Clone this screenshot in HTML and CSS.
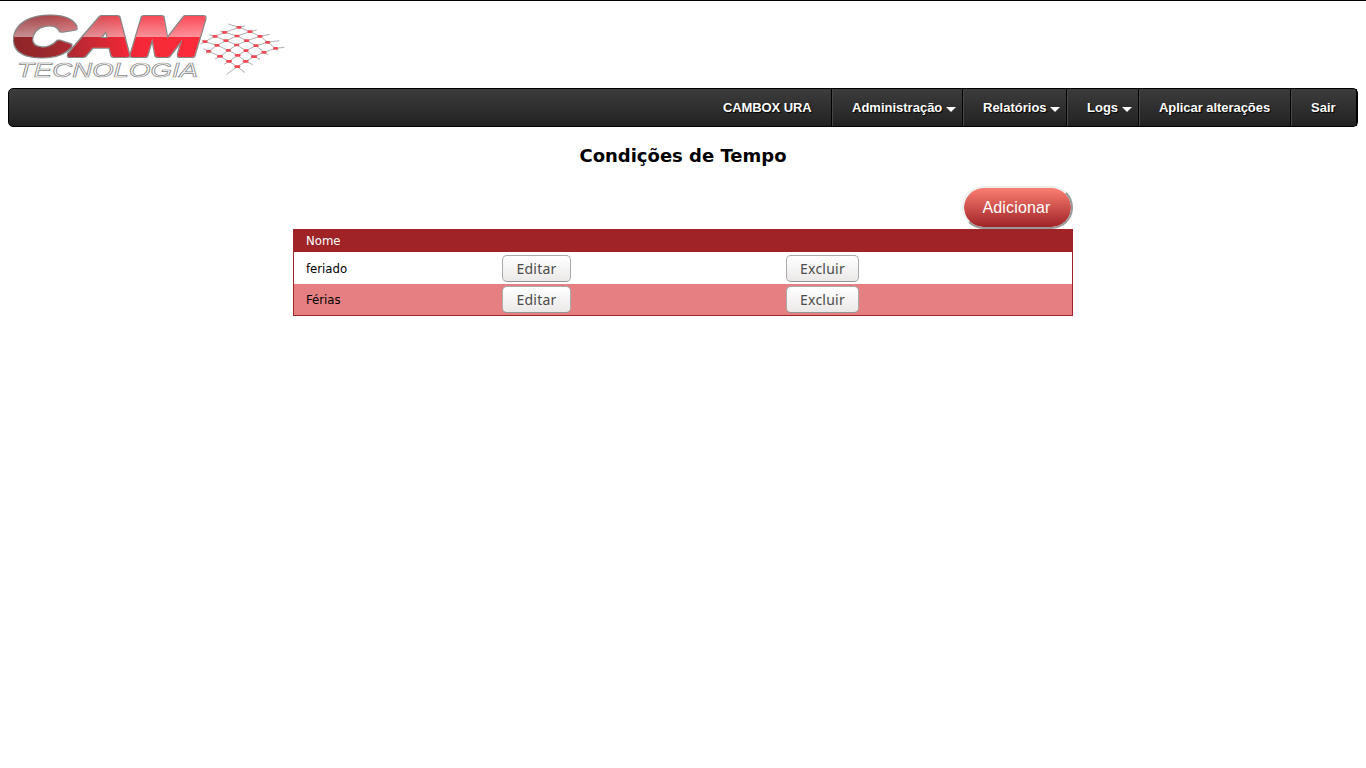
FILE: index.html
```html
<!DOCTYPE html>
<html lang="pt-BR">
<head>
<meta charset="utf-8">
<title>CAMBOX URA</title>
<link rel="stylesheet" href="styles.css">
</head>
<body>
<header class="brand">
<svg class="logo" width="290" height="86" viewBox="0 1 290 86" role="img" aria-label="CAM Tecnologia">
<defs>
<linearGradient id="shade" x1="0" x2="1" y1="0" y2="0"><stop offset="0" stop-color="#8d2429"/><stop offset=".2" stop-color="#9b292e"/><stop offset=".58" stop-color="#f22837"/><stop offset="1" stop-color="#ff2b3c"/></linearGradient>
<linearGradient id="gloss" x1="0" x2="0" y1="0" y2="1"><stop offset="0" stop-color="#fff" stop-opacity=".12"/><stop offset=".49" stop-color="#fff" stop-opacity=".48"/><stop offset=".5" stop-color="#fff" stop-opacity="0"/></linearGradient>
<pattern id="metal" patternUnits="userSpaceOnUse" x="8" y="14" width="208" height="46"><rect width="208" height="46" fill="url(#shade)"/><rect width="208" height="46" fill="url(#gloss)"/></pattern>
<filter id="rim" filterUnits="userSpaceOnUse" x="0" y="0" width="220" height="70"><feMorphology in="SourceAlpha" operator="dilate" radius="1" result="d"/><feFlood flood-color="#858585"/><feComposite in2="d" operator="in"/><feComposite in="SourceGraphic" operator="over"/></filter>
</defs>
<text class="logo-name" x="13" y="55" textLength="188" lengthAdjust="spacingAndGlyphs" fill="url(#metal)" stroke="url(#metal)" filter="url(#rim)">CAM</text>
<text class="logo-sub" x="17" y="77" textLength="181" lengthAdjust="spacingAndGlyphs">TECNOLOGIA</text>
<g transform="translate(140 0) scale(.33333)">
<g class="mesh">
<path d="M265 72L297 82 330 95 360 109 383 127 407 145 415 152M240 93L254 97 291 108 320 122 348 137 372 157 385 165M208 104L225 109 258 122 290 135 318 152 342 170 360 178M185 120L195 125 231 136 265 151 293 166 317 184 338 194M190 146L206 154 240 169 267 184 292 200 315 218"/>
<path d="M315 78L297 82 254 97 225 109 195 125 182 132M350 90L330 95 291 108 258 122 231 136 206 154 198 160M390 103L360 109 320 122 290 135 265 151 240 169 225 177M418 122L383 127 348 137 318 152 293 166 267 184 252 193M433 142L407 145 372 157 342 170 317 184 292 200 260 223"/>
</g>
<path class="nodes" d="M293 82h8M250 97h8M326 95h8M221 109h8M287 108h8M356 109h8M191 125h8M254 122h8M316 122h8M379 127h8M227 136h8M286 135h8M344 137h8M403 145h8M202 154h8M261 151h8M314 152h8M368 157h8M235 169h10M288 166h10M337 170h10M262 184h10M312 184h10M287 200h10"/>
</g>
</svg>
</header>
<nav class="menu">
<a class="item product">CAMBOX URA</a>
<a class="item drop admin">Administração</a>
<a class="item drop reports">Relatórios</a>
<a class="item drop logs">Logs</a>
<a class="item apply">Aplicar alterações</a>
<a class="item exit">Sair</a>
</nav>
<main class="content">
<h1 class="title">Condições de Tempo</h1>
<div class="actions"><button class="add">Adicionar</button></div>
<table class="list">
<colgroup><col class="c-name"><col class="c-edit"><col class="c-del"></colgroup>
<thead><tr><th>Nome</th><th></th><th></th></tr></thead>
<tbody>
<tr><td>feriado</td><td><button class="btn edit">Editar</button></td><td><button class="btn del">Excluir</button></td></tr>
<tr class="alt"><td>Férias</td><td><button class="btn edit">Editar</button></td><td><button class="btn del">Excluir</button></td></tr>
</tbody>
</table>
</main>
</body>
</html>
```
FILE: styles.css
```css
* { box-sizing: border-box; }
body { margin: 0; border-top: 1px solid #000; background: #fff; color: #000; font-family: "DejaVu Sans", sans-serif; }
.brand { height: 87px; }
.logo { display: block; }
.logo-name { font: italic bold 54px "Liberation Sans", sans-serif; stroke-width: 4px; stroke-linejoin: round; }
.logo-sub { font: italic 20px "Liberation Sans", sans-serif; fill: #fff; stroke: #888; stroke-width: .7px; }
.mesh { fill: none; stroke: #858585; stroke-width: 2; }
.nodes { fill: none; stroke: #f04b55; stroke-width: 8; stroke-linecap: round; }

.menu { display: flex; justify-content: flex-end; height: 39px; margin: 0 8px; border: 1px solid #000; border-radius: 5px; background: linear-gradient(#3c3c3c, #222); }
.item { position: relative; padding-left: 20px; border-right: 1px solid #000; font: bold 13px/37px "Liberation Sans", sans-serif; color: #fff; text-shadow: 1px 1px 1px #000; white-space: nowrap; }
.item + .item { box-shadow: inset 1px 0 #464646; }
.product { width: 129px; letter-spacing: -.1px; }
.admin { width: 131px; }
.reports { width: 104px; }
.logs { width: 72px; }
.apply { width: 152px; letter-spacing: -.05px; }
.exit { width: 66px; }
.drop::after { content: ""; position: absolute; right: 6px; top: 18px; border: 5px solid transparent; border-top-color: #fff; border-bottom: 0; }

.content { width: 780px; margin: 0 auto; }
.title { margin: 0; padding-top: 18px; font-size: 18px; line-height: 22px; text-align: center; }
.actions { display: flex; justify-content: flex-end; padding-top: 19px; }
.add { width: 111px; height: 43px; padding: 0 2px 0 0; border: 2px solid; border-color: #eee #999 #999 #eee; border-radius: 22px; background: linear-gradient(#fb7f71, #a02328) padding-box; color: #fff; font: 16px "Liberation Sans", sans-serif; letter-spacing: .15px; }
.list { width: 780px; table-layout: fixed; border-spacing: 0; border: 1px solid #a02328; font-size: 12px; }
.c-name { width: 208px; }
.c-edit { width: 284px; }
th { height: 22px; padding: 0 0 2px 12px; background: #a02328; color: #fff; font-weight: normal; text-align: left; }
td { height: 32px; padding: 1px 0 0; }
th, td:first-child { font-family: "DejaVu Sans Condensed", "DejaVu Sans", sans-serif; font-stretch: condensed; font-size: 13px; }
td:first-child { padding-left: 12px; }
.alt td { height: 31px; padding-top: 0; background: #e67f81; }
.btn { display: block; height: 27px; padding: 0; border: 1px solid #aaa; border-bottom-color: #949494; border-radius: 5px; background: linear-gradient(#fff, #ebe9e8); color: #4c4c4c; font: 14px "Noto Sans", sans-serif; letter-spacing: .25px; }
.edit { width: 69px; }
.del { width: 73px; }
```
